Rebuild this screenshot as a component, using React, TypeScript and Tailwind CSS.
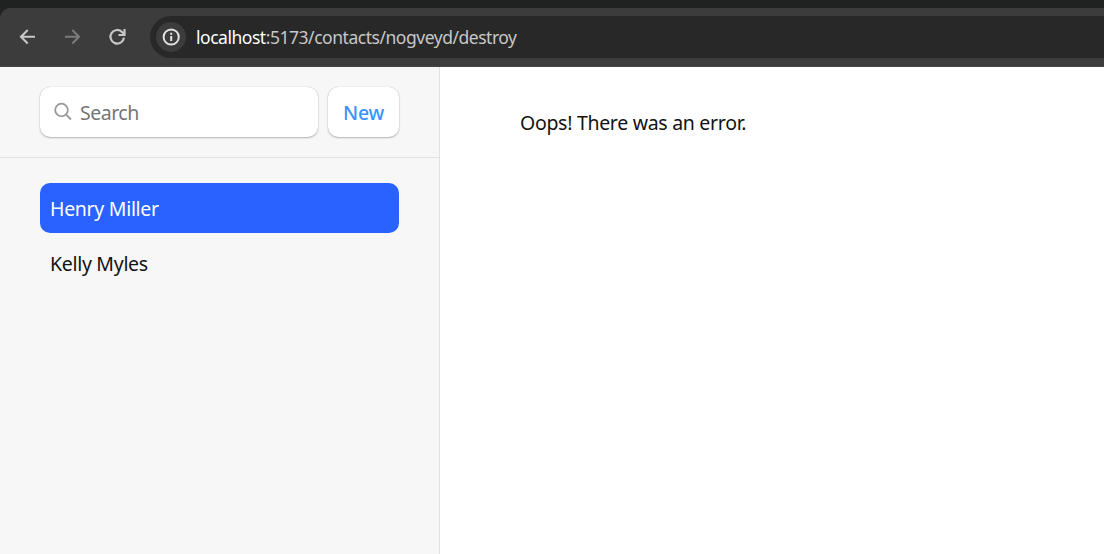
const contacts = [
  { name: "Henry Miller", active: true },
  { name: "Kelly Myles", active: false },
];

function BrowserBar() {
  return (
    <header className="h-[67px] shrink-0 bg-[#202221] pt-2">
      <div className="flex h-[59px] items-start rounded-tl-[10px] border-b border-[#484445] bg-[#3c3c3c] pt-2">
        <div className="flex h-[42px] w-[150px] shrink-0 items-center pl-[18px]">
          <svg className="h-5 w-5" viewBox="0 0 20 20" fill="none" stroke="#c7c7c7" strokeWidth="2.1">
            <path d="M17 9.7H3.5M9.7 3L3 9.7l6.7 6.7" />
          </svg>
          <svg className="ml-6 h-5 w-5" viewBox="0 0 20 20" fill="none" stroke="#7b7b7b" strokeWidth="2.1">
            <path d="M3 9.7h13.5M10.3 3L17 9.7l-6.7 6.7" />
          </svg>
          <svg className="ml-[25px] h-5 w-5" viewBox="0 0 20 20" fill="none" stroke="#c7c7c7" strokeWidth="2.2">
            <path d="M17 10.7a6.800 6.800 0 1 1-1.700-5.500L17.300 7.200" />
            <path d="M17.500 2v6H11.500" />
          </svg>
        </div>
        <div className="flex h-[42px] flex-1 items-center rounded-l-full bg-[#282828] pl-1.5">
          <div className="flex h-[30px] w-[30px] items-center justify-center rounded-full bg-[#3c3c3c]">
            <svg className="h-5 w-5" viewBox="0 0 20 20" fill="none" stroke="#e3e3e3" strokeWidth="2">
              <circle cx="10.2" cy="10" r="7.6" />
              <path d="M10.2 9v5M10.2 5.8v2" />
            </svg>
          </div>
          <div className="ml-[10px] whitespace-nowrap text-[17.5px] tracking-[-0.47px] text-[#c7c7c7]">
            <span className="text-white">localhost</span>:5173/contacts/nogveyd/destroy
          </div>
        </div>
      </div>
    </header>
  );
}

function Sidebar() {
  return (
    <aside className="flex w-[440px] shrink-0 flex-col border-r border-[#e2e2e2] bg-[#f7f7f7]">
      <div className="flex h-[91px] gap-2.5 border-b border-[#e2e2e2] px-10 pt-5">
        <label className="flex h-[50px] w-[278px] items-center rounded-[10px] bg-white pl-3.5 shadow-[0_0_1px_rgba(0,0,0,0.25),0_1px_2px_rgba(0,0,0,0.25)]">
          <svg className="h-5 w-5 shrink-0" viewBox="0 0 20 20" fill="none" stroke="#999" strokeWidth="1.8">
            <circle cx="7.5" cy="8" r="6.3" />
            <path d="M12 12.5l5 5" />
          </svg>
          <input
            className="ml-1.5 w-[210px] bg-transparent pt-0.5 text-[19.5px] leading-[30px] tracking-[-0.5px] outline-none placeholder:text-[#757575]"
            placeholder="Search"
          />
        </label>
        <button className="h-[50px] w-[71px] rounded-[10px] bg-white pt-0.5 text-[19.5px] font-medium text-[#3992ff] shadow-[0_0_1px_rgba(0,0,0,0.25),0_1px_2px_rgba(0,0,0,0.25)]">
          New
        </button>
      </div>
      <nav className="flex flex-col gap-[5px] px-10 pt-[25px]">
        {contacts.map((contact) => (
          <a
            key={contact.name}
            className={
              contact.active
                ? "flex h-[50px] w-[359px] items-center rounded-[10px] bg-[#2962ff] pl-2.5 pt-0.5 text-white"
                : "flex h-[50px] w-[359px] items-center rounded-[10px] pl-2.5 pt-0.5 text-[#121212]"
            }
          >
            {contact.name}
          </a>
        ))}
      </nav>
    </aside>
  );
}

export default function App() {
  return (
    <div className="flex h-[554px] w-full flex-col overflow-hidden bg-white font-['Noto_Sans',sans-serif] text-[19.5px] tracking-[-0.3px] text-[#121212]">
      <BrowserBar />
      <div className="flex min-h-0 flex-1">
        <Sidebar />
        <main className="px-20 pt-[41px] leading-[30px]">Oops! There was an error.</main>
      </div>
    </div>
  );
}
